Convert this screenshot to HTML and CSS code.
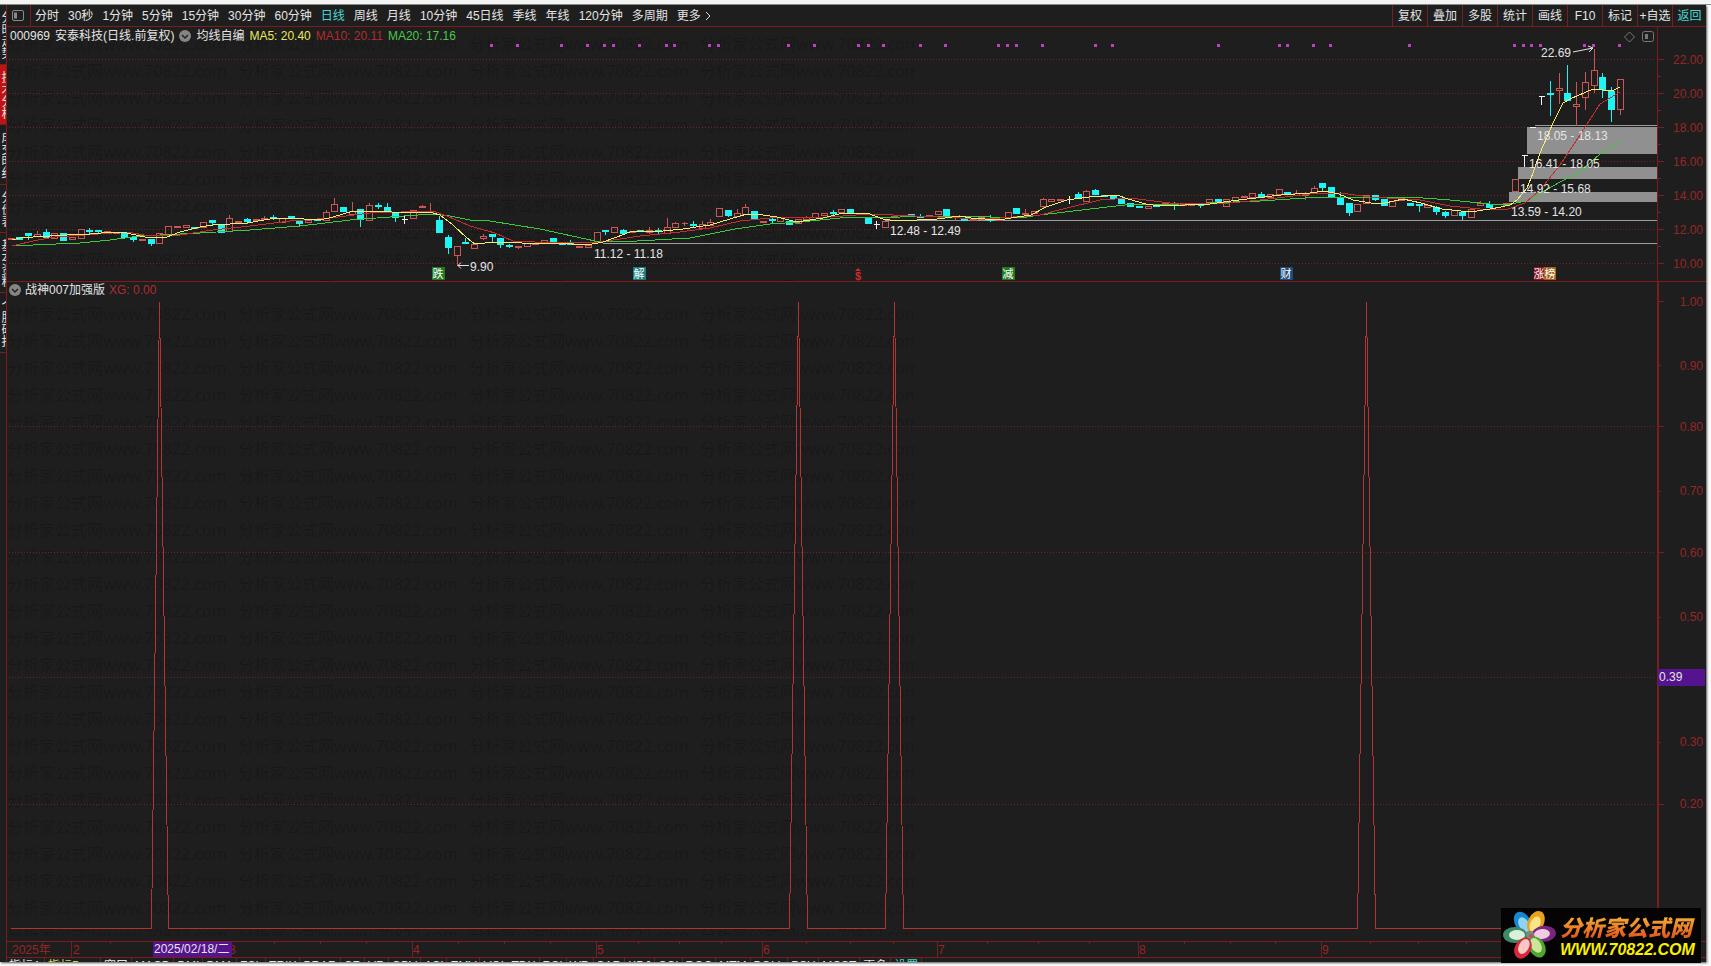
FILE: index.html
```html
<!DOCTYPE html>
<html lang="zh-CN">
<head>
<meta charset="utf-8">
<title>安泰科技 000969 日线</title>
<link rel="stylesheet" href="styles.css">
</head>
<body>
<div class="top-strip"></div>
<div class="terminal">
  <nav class="side-tabs" aria-label="功能">
    <button class="side-tab">分时走势</button>
    <button class="side-tab active">技术分析</button>
    <button class="side-tab">成交明细</button>
    <button class="side-tab">分价表</button>
    <button class="side-tab">基本资料</button>
    <button class="side-tab">个股研报</button>
  </nav>
  <main class="workspace">
    <header class="toolbar">
      <button class="panel-toggle" aria-label="侧栏">
        <svg width="12" height="11" viewBox="0 0 12 11"><rect x=".5" y=".5" width="11" height="10" rx="1.5" fill="none" stroke="#8a8a8a"/><rect x="2" y="2.500" width="3" height="6" fill="#8a8a8a"/></svg>
      </button>
      <div class="periods">
        <button>分时</button><button>30秒</button><button>1分钟</button><button>5分钟</button><button>15分钟</button><button>30分钟</button><button>60分钟</button><button class="current">日线</button><button>周线</button><button>月线</button><button>10分钟</button><button>45日线</button><button>季线</button><button>年线</button><button>120分钟</button><button>多周期</button><button class="more">更多<svg width="6" height="10" viewBox="0 0 6 10"><path d="M1 1l4 4-4 4" fill="none" stroke="#ddd"/></svg></button>
      </div>
      <div class="tools">
        <button>复权</button><button>叠加</button><button>多股</button><button>统计</button><button>画线</button><button>F10</button><button>标记</button><button>+自选</button><button class="current">返回</button>
      </div>
    </header>

    <section class="panel">
      <svg class="plot" viewBox="7 27 1699 255" preserveAspectRatio="none" role="img" aria-label="K线图">
        <defs>
          <pattern id="mark-a" x="7" y="30" width="231" height="27" patternUnits="userSpaceOnUse"><text class="mark" x="0" y="20">分析家公式网www.70822.com</text></pattern>
        </defs>
        <rect x="7" y="27" width="908" height="254" fill="url(#mark-a)"/>
        <path class="grid" d="M9 59.500H1654M9 93.500H1654M9 127.500H1654M9 161.500H1654M9 195.500H1654M9 229.500H1654M9 263.500H1654"/>
        <g class="zones">
          <rect x="1527" y="127" width="130" height="27"/><rect x="1518" y="167" width="139" height="12"/><rect x="1509" y="192" width="148" height="10"/>
          <path d="M1535 125.500H1657M885 220.500H1657M603 243.500H1657"/>
        </g>
        <g id="candles"></g>
        <g class="averages">
          <polyline class="ma20" points="12,246 33,245 80,243 110,240 140,236 200,233 250,230 300,226 350,220 390,217 433,214 450,216 470,220 490,221 540,229 595,241 620,242 690,238 735,229 770,224 800,222 850,217 900,217 960,216 1020,218 1040,215 1090,209 1125,205 1180,204 1260,201 1320,197 1410,197 1450,200 1490,204 1510,204 1527,201 1560,182 1580,172 1600,154 1620,142"/>
          <polyline class="ma10" points="12,246 33,241 55,237 127,232 150,236 180,235 213,230 250,226 290,221 330,218 370,213 433,211 447,216 470,226 495,233 513,241 557,243 600,242 640,236 680,232 710,228 740,221 770,218 830,217 870,214 960,218 1000,218 1040,215 1067,208 1100,200 1130,198 1170,203 1230,203 1260,200 1310,194 1340,193 1370,197 1420,200 1450,206 1480,209 1508,209 1525,203 1540,190 1560,165 1580,135 1600,104 1620,92"/>
          <polyline class="ma5" points="12,240 20,238 33,237 67,235 90,234 113,232 127,233 140,236 150,238 167,237 180,232 200,227 213,225 247,223 270,219 287,218 320,220 333,217 353,211 387,211 397,213 413,212 433,213 440,215 453,225 467,238 475,244 485,243 513,242 530,244 557,243 587,245 603,242 617,237 630,232 663,231 683,229 710,225 730,219 747,214 763,215 777,217 797,222 823,218 843,213 867,213 883,219 897,221 937,219 960,216 971,218 999,220 1017,217 1031,215 1046,207 1067,200 1089,197 1117,195 1128,199 1146,204 1160,206 1210,204 1231,201 1264,197 1281,195 1310,193 1324,191 1339,194 1353,200 1371,203 1385,203 1403,199 1421,203 1442,209 1471,212 1496,208 1510,205 1517,200 1527,188 1533,173 1540,153 1553,123 1563,103 1570,99 1593,89 1612,91 1620,87"/>
        </g>
        <g id="dots"></g>
        <g class="notes">
          <path d="M458 265.500H469M461 262.500l-3 3 3 3M1573 52l20-4M1588 46l5 2-4 4"/>
          <text x="470" y="271">9.90</text>
          <text x="594" y="258">11.12 - 11.18</text>
          <text x="890" y="235">12.48 - 12.49</text>
          <text x="1511" y="216">13.59 - 14.20</text>
          <text x="1520" y="193">14.92 - 15.68</text>
          <text x="1529" y="168">16.41 - 18.05</text>
          <text x="1537" y="140">18.05 - 18.13</text>
          <text x="1541" y="57">22.69</text>
        </g>
        <g class="badges">
          <rect x="432" y="267" width="13" height="13" fill="#1f7a20"/><text x="438" y="278">跌</text>
          <rect x="633" y="267" width="13" height="13" fill="#1b7c80"/><text x="639" y="278">解</text>
          <rect x="1002" y="267" width="13" height="13" fill="#1f7a20"/><text x="1008" y="278">减</text>
          <rect x="1280" y="267" width="13" height="13" fill="#1c4b7c"/><text x="1286" y="278">财</text>
          <rect x="1534" y="267" width="10" height="13" fill="#8c1518"/><rect x="1544" y="267" width="12" height="13" fill="#a0611c"/>
          <text x="1539" y="278">涨</text><text x="1550" y="278">榜</text>
          <text class="dividend" x="858" y="280">$</text><path d="M855 271l3-3 3 3z" fill="#d02a2a"/>
        </g>
        <g class="axis">
          <path d="M1657.500 27V281M7 281.500H1706"/>
          <path d="M1658 59.500h6M1658 93.500h6M1658 127.500h6M1658 161.500h6M1658 195.500h6M1658 229.500h6M1658 263.500h6M1658 76.500h3M1658 110.500h3M1658 144.500h3M1658 178.500h3M1658 212.500h3M1658 246.500h3"/>
          <text x="1703" y="64">22.00</text><text x="1703" y="98">20.00</text><text x="1703" y="132">18.00</text><text x="1703" y="166">16.00</text><text x="1703" y="200">14.00</text><text x="1703" y="234">12.00</text><text x="1703" y="268">10.00</text>
        </g>
        <g fill="none" stroke="#777"><path d="M1629.500 32l5 5-5 5-5-5z"/><rect x="1642.500" y="31.500" width="11" height="10" rx="2"/><path d="M1646.500 34v5" stroke-width="3"/></g>
      </svg>
      <div class="caption">
        <span>000969</span><span>安泰科技(日线.前复权)</span>
        <button class="chevron" aria-label="指标菜单"><svg width="12" height="12" viewBox="0 0 12 12"><circle cx="6" cy="6" r="6" fill="#858585"/><path d="M3 5l3 3 3-3" fill="none" stroke="#222" stroke-width="1.500"/></svg></button>
        <span>均线自编</span><span class="v5">MA5: 20.40</span><span class="v10">MA10: 20.11</span><span class="v20">MA20: 17.16</span>
      </div>
    </section>

    <section class="panel">
      <svg class="plot" viewBox="7 282 1699 659" preserveAspectRatio="none" role="img" aria-label="战神007加强版">
        <defs>
          <pattern id="mark-b" x="7" y="300" width="231" height="27" patternUnits="userSpaceOnUse"><text class="mark" x="0" y="20">分析家公式网www.70822.com</text></pattern>
        </defs>
        <rect x="7" y="300" width="908" height="636" fill="url(#mark-b)"/>
        <path class="grid" d="M9 426.500H1654M9 552.500H1654M9 677.500H1654M9 804.500H1654"/>
        <path class="signal" d="M11 928.500H151.500L159.500 302L168.500 928.500H789.500L798.500 302L807.500 928.500H885.500L894.500 302L903.500 928.500H1357.500L1366.500 302L1375.500 928.500H1650"/>
        <g class="axis">
          <path d="M1658 282V941" stroke-width="2"/>
          <path d="M1659 301.500h5M1659 426.500h5M1659 552.500h5M1659 804.500h5M1659 365.500h2M1659 491.500h2M1659 617.500h2M1659 742.500h2"/>
          <text x="1703" y="306">1.00</text><text x="1703" y="370">0.90</text><text x="1703" y="431">0.80</text><text x="1703" y="495">0.70</text><text x="1703" y="557">0.60</text><text x="1703" y="621">0.50</text><text x="1703" y="746">0.30</text><text x="1703" y="808">0.20</text>
        </g>
        <rect x="1658" y="669" width="47" height="17" fill="#55138f"/><text class="level" x="1659" y="681">0.39</text>
      </svg>
      <div class="caption compact">
        <button class="chevron" aria-label="指标菜单"><svg width="12" height="12" viewBox="0 0 12 12"><circle cx="6" cy="6" r="6" fill="#858585"/><path d="M3 5l3 3 3-3" fill="none" stroke="#222" stroke-width="1.500"/></svg></button>
        <span>战神007加强版</span><span class="v10">XG: 0.00</span>
      </div>
    </section>

    <section class="panel">
      <svg class="plot" viewBox="7 941 1699 16" preserveAspectRatio="none" role="img" aria-label="时间轴">
        <g class="axis">
          <path d="M7 941.500H1706M71.500 941v16M412.500 941v16M596.500 941v16M762.500 941v16M937.500 941v16M1138.500 941v16M1321.500 941v16"/>
          <path d="M110.500 942v2M274.500 942v2M320.500 942v2M366.500 942v2M458.500 942v2M504.500 942v2M550.500 942v2M638.500 942v2M679.500 942v2M721.500 942v2M806.500 942v2M850.500 942v2M893.500 942v2M987.500 942v2M1038.500 942v2M1089.500 942v2M1184.500 942v2M1230.500 942v2M1275.500 942v2M1370.500 942v2M1418.500 942v2M1466.500 942v2"/>
        </g>
        <g class="months"><text x="12" y="954">2025年</text><text x="73" y="954">2</text><text x="229" y="954">3</text><text x="413" y="954">4</text><text x="597" y="954">5</text><text x="763" y="954">6</text><text x="938" y="954">7</text><text x="1139" y="954">8</text><text x="1322" y="954">9</text></g>
        <rect x="153" y="942" width="79" height="15" fill="#55138f"/><text class="level" x="154" y="953">2025/02/18/二</text>
      </svg>
    </section>

    <footer class="indicators">
      <button class="set-a">指标A</button><button class="set-b">指标B</button><button>窗口</button><button>MACD</button><button>DMI</button><button>DMA</button><button>FSL</button><button>TRIX</button><button>BRAR</button><button>CR</button><button>VR</button><button>OBV</button><button>ASI</button><button>EMV</button><button>VOL-TDX</button><button>RSI</button><button>WR</button><button>SAR</button><button>KDJ</button><button>CCI</button><button>ROC</button><button>MTM</button><button>BOLL</button><button>PSY</button><button>MCST</button><button>更多</button><button class="current">设置</button>
    </footer>
  </main>
</div>

<a class="site-logo" href="#" aria-label="分析家公式网">
  <svg width="56" height="54" viewBox="0 0 56 54">
    <g transform="translate(29 26)">
      <g transform="rotate(-30)"><ellipse cy="-14" rx="8" ry="12" fill="#1787cf"/><ellipse cy="-12" rx="5" ry="8" fill="#8fd3f5"/></g>
      <g transform="rotate(25)"><ellipse cy="-14" rx="8" ry="12" fill="#eaa21c"/><ellipse cy="-12" rx="5" ry="8" fill="#fbe486"/></g>
      <g transform="rotate(85)"><ellipse cy="-14" rx="8" ry="12" fill="#7a2680"/><ellipse cy="-12" rx="5" ry="8" fill="#f0cbe2"/></g>
      <g transform="rotate(270)"><ellipse cy="-15" rx="8" ry="12" fill="#3e8a66"/><ellipse cy="-13" rx="5" ry="8" fill="#dcefd8"/></g>
      <g transform="rotate(150)"><ellipse cy="-14" rx="8" ry="11" fill="#4fa52e"/><ellipse cy="-12" rx="5" ry="8" fill="#c9e79b"/></g>
      <g transform="rotate(208)"><ellipse cy="-15" rx="8" ry="11" fill="#d8283a"/><ellipse cy="-13" rx="5" ry="8" fill="#f8c8c4"/></g>
      <circle r="4" fill="#7b8a86"/><circle cx="1" cy="1" r="2" fill="#c4523a"/>
    </g>
  </svg>
  <span class="logo-words"><span class="logo-name">分析家公式网</span><span class="logo-url">WWW.70822.COM</span></span>
</a>
<script src="chart.js"></script>
</body>
</html>
```
FILE: styles.css
```css
* { box-sizing: border-box; }

body {
  margin: 0;
  min-height: 100vh;
  display: flex;
  flex-direction: column;
  background: #fafafa;
  color: #e4e4e4;
  font: 12px/14px "Liberation Sans", "Noto Sans CJK SC", sans-serif;
  position: relative;
}

button {
  margin: 0;
  padding: 0;
  border: 0;
  background: none;
  color: inherit;
  font: inherit;
  white-space: nowrap;
  cursor: pointer;
}

.top-strip {
  height: 5px;
  background: #f3f3f3;
  border-bottom: 1px solid #8a8f88;
}

.terminal {
  flex: 1;
  display: flex;
  margin: 0 5px 4px 0;
  background: #1e1e1e;
  box-shadow: 1px 1px 2px #555;
}

.side-tabs {
  width: 7px;
  display: flex;
  flex-direction: column;
  border-right: 1px solid #7c1d1d;
  overflow: hidden;
}

.side-tab {
  display: flex;
  flex-direction: column;
  justify-content: flex-end;
  width: 6px;
  padding: 6px 2px 5px 0;
  border-bottom: 1px solid #7c1d1d;
  writing-mode: vertical-rl;
  line-height: 12px;
  overflow: hidden;
}

.side-tab.active { background: #c01414; }

.workspace {
  flex: 1;
  min-width: 0;
  display: grid;
  grid-template-rows: 22px minmax(0, 255fr) minmax(0, 659fr) 16px 5px;
}

.toolbar {
  display: flex;
  align-items: stretch;
  border-bottom: 1px solid #7c1d1d;
}

.panel-toggle {
  display: flex;
  align-items: center;
  width: 24px;
  padding-left: 5px;
  border-right: 1px solid #7c1d1d;
}

.periods {
  flex: 1;
  display: flex;
  align-items: center;
  gap: 9px;
  padding-left: 4px;
  overflow: hidden;
}

.more { display: flex; align-items: center; gap: 4px; }
.current { color: #46d8d8; }

.tools {
  display: grid;
  grid-template-columns: repeat(8, 35px) 34px;
}

.tools button { border-left: 1px solid #7c1d1d; padding-top: 1px; }

.panel { display: grid; min-height: 0; overflow: hidden; }
.plot { grid-area: 1 / 1; width: 100%; height: 100%; display: block; }

.caption {
  grid-area: 1 / 1;
  align-self: start;
  justify-self: start;
  display: flex;
  align-items: center;
  gap: 5px;
  padding: 2px 3px;
}

.caption.compact { gap: 4px; padding: 1px 2px; }

.chevron { display: flex; }
.v5 { color: #e8e85a; }
.v10 { color: #b02c30; }
.v20 { color: #48c848; }

svg text { font: 12px "Liberation Sans", "Noto Sans CJK SC", sans-serif; }
svg .mark { font: 16px "Noto Sans", "Noto Sans CJK SC", sans-serif; fill: #181818; }

.grid { stroke: #6e2222; stroke-dasharray: 1 2; shape-rendering: crispEdges; }
.zones rect { fill: #909090; }
.zones path { stroke: #9c9c9c; shape-rendering: crispEdges; }

.averages polyline { fill: none; stroke-width: 1; shape-rendering: crispEdges; }
.averages .ma5 { stroke: #f4ec70; }
.averages .ma10 { stroke: #c42e2e; }
.averages .ma20 { stroke: #3cc83c; }

.up { fill: none; stroke: #cc5555; }
.down { fill: #1ff4f4; stroke: #1ff4f4; }
.flat { fill: none; stroke: #f0f0f0; }
#candles, #dots { shape-rendering: crispEdges; }
#dots { fill: #c040c0; }

.notes path { fill: none; stroke: #e4e4e4; }
.notes text, .level { fill: #e4e4e4; }
.badges text { fill: #fff; text-anchor: middle; font-size: 11px; }
.badges .dividend { fill: #d02a2a; font-weight: bold; }

.axis path { fill: none; stroke: #7c1d1d; shape-rendering: crispEdges; }
.axis text { fill: #962626; text-anchor: end; }
.months text { fill: #962626; }
.signal { fill: none; stroke: #b43434; shape-rendering: crispEdges; }

.indicators {
  display: flex;
  align-items: flex-start;
  border-top: 1px solid #7c1d1d;
  overflow: hidden;
}

.indicators button {
  padding: 1px 3px 0;
  border-right: 1px solid #7c1d1d;
}

.indicators .set-a { padding-left: 2px; }
.indicators .set-b { color: #d8d860; padding-right: 20px; }

.site-logo {
  position: absolute;
  right: 10px;
  bottom: 3px;
  display: flex;
  align-items: center;
  width: 200px;
  height: 55px;
  background: #050303;
  text-decoration: none;
}

.logo-words { display: flex; flex-direction: column; padding-left: 3px; gap: 4px; }

.logo-name {
  font: italic 900 22px/24px "Noto Sans CJK SC", sans-serif;
  color: #f08a28;
  background: linear-gradient(#f4b83a, #e2561c);
  background-clip: text;
  -webkit-text-fill-color: transparent;
  white-space: nowrap;
}

.logo-url {
  font: italic bold 16px/16px "Liberation Sans", sans-serif;
  color: #f8f000;
}
```
FILE: chart.js
```js
// Each bar: kind, body top, body bottom, high, low. r = up, c = down, t / x / d = flat marks.
// Levels are counted in thirds of a unit from the line at y = 170.
const bars = `r 205 207|c 202 206 197 208|c 190 195 185 208|r 192 198 180|c 186 200 174 202|r 190 205|c 188 209|r 202 206|r 178 205|c 180 183 172 190
c 180 183 176 190|r 184 186|r 186 190|c 188 202|c 202 208 195 214|r 206 210|c 207 219 207 224|r 188 220|r 169 192|r 169 172
r 164 170|c 171 174|r 156 172 152|c 150 155 146 166|c 163 187|r 145 184 132|r 152 155|c 148 152 142 160|r 148 151|r 143 148 135
c 141 143 132 148|r 143 157|c 139 144|c 152 158 152 165|r 150 156|c 146 150|r 127 150 118|r 103 122 82|c 112 122|r 122 132 92 134
c 118 147 118 168|r 106 151 97|c 104 107 95 115|c 111 120 95|c 128 142 128 152|x 146|r 119 145|r 108 111 102 112|r 122 125 97|c 150 185 135
c 202 232 193 248|r 229 256 229 285|c 217 220 200|r 223 235
r 198 205 190 208|c 193 198 193 213|c 205 222 205 232|c 224 227 218 232|r 227 231 227 235|r 218 227|r 219 222|r 210 217|c 205 216|c 218 223
c 218 223 208|r 228 232|r 226 230|r 187 215|c 180 183 180 192|r 172 185|c 180 190 175|r 182 185|c 181 184|r 179 186 167 190
c 181 184 172 190|r 170 190 142|r 160 170 153|r 158 160 152 165|c 162 164 150 172|r 163 174 150|r 155 165 145|r 115 139|c 119 134 119 139|r 128 137 115
r 112 132 100|c 122 145|r 154 157|c 148 151 142 157|r 142 152|c 152 162|r 148 158|r 141 146 135|r 130 142|r 128 134
c 126 129 118 135|r 118 126|c 118 128|c 128 133|c 140 158|x 162|r 153 170|r 137 142|r 134 138|c 133 138
c 138 141 130|r 136 139|r 124 132 120|c 118 134|r 138 142 134 150|c 147 150 142
r 146 150|r 142 146|c 144 149 132 152|r 147 150|r 125 140|c 114 128 110|r 128 132 115|r 124 128|r 86 107 82 115|r 88 92
r 88 89|x 87|c 72 84 64|r 62 92 58|c 60 72 55|c 75 77|c 78 84|c 84 100|c 98 108|c 108 112
r 107 115|c 103 107|r 98 105|c 102 105 92 116|r 101 104|r 101 105|c 104 106 100 112|r 86 100|c 86 96|r 88 109
r 80 90|r 77 81|r 70 81|c 72 80 62|r 72 82|r 58 72|c 67 72|r 70 74 58|r 72 76 62 88|r 53 66 45
c 40 50 38 60|c 52 82|c 80 102 64|c 100 126 100 135|r 103 122|r 76 98|c 76 86 72 90|c 88 104|r 92 108|r 84 90
c 98 104|c 102 106 102 122|r 105 112|c 110 122 105 132|c 126 134 120 140|r 120 136|c 126 136 122 148|r 118 140|r 100 104 90|c 102 110 90
c 110 112|r 98 106|r 28 64|t -46 -12|d -130|t -223 -197|c -230 -228 -270 -165|r -245 -239 -294 -202|c -230 -211 -317|r -199 -191 -266 -135
r -263 -218 -297 -183|r -299 -256 -365 -235|c -278 -242 -294 -218|c -238 -182 -252 -148|r -274 -182 -274 -169`.split(/[|\n]/);

const step = 8.745;
const level = v => Math.round(170 + v / 3) + 0.5;

document.getElementById('candles').innerHTML = bars.map((bar, i) => {
  const [kind, ...values] = bar.trim().split(' ');
  const [a, b, h = a, l = b] = values.map(Number);
  const x = Math.round(10.7 + i * step) + 0.5;
  const top = level(a);
  if (kind === 'x') return `<path class="flat" d="M${x - 3} ${top}h6M${x} ${top - 4}v8"/>`;
  if (kind === 'd') return `<path class="flat" d="M${x - 3} ${top}h6"/>`;
  if (kind === 't') return `<path class="flat" d="M${x - 3} ${top}h6M${x} ${top}V${level(b)}"/>`;
  const bottom = level(b);
  return `<path class="${kind === 'r' ? 'up' : 'down'}" d="M${x - 3} ${top}h6V${bottom}h-6zM${x} ${level(h)}V${top}M${x} ${bottom}V${level(l)}"/>`;
}).join('');

const signals = [491, 517, 561, 587, 604, 613, 639, 666, 674, 709, 718, 788, 814, 858, 868, 883, 920, 945,
  998, 1007, 1016, 1042, 1095, 1112, 1218, 1279, 1287, 1313, 1330, 1409, 1514, 1523, 1531, 1540, 1584, 1593, 1619];
document.getElementById('dots').innerHTML = signals.map(x => `<rect x="${x - 1}" y="44" width="3" height="3"/>`).join('');
```
